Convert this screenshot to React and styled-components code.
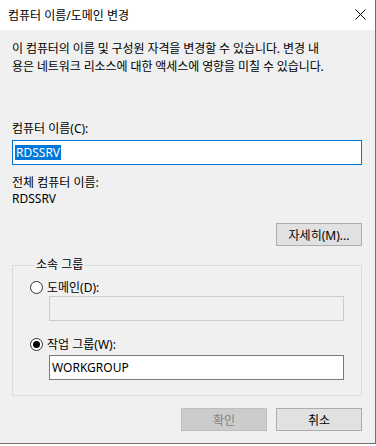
import React from "react";
import styled, { createGlobalStyle } from "styled-components";

const GlobalStyle = createGlobalStyle`
	html, body {
		margin: 0;
		padding: 0;
		background: #ffffff;
	}
	body {
		font-family: "Noto Sans", "Noto Sans CJK KR", sans-serif;
		font-size: 12px;
		color: #000000;
	}
`;

const StyledWindow = styled.div`
	width: 375px;
	height: 443px;
	background: #f0f0f0;
	border-right: 1px solid #6f6f6f;
	border-bottom: 1px solid #6f6f6f;
	display: flex;
	flex-direction: column;
`;

const TitleBar = styled.div`
	height: 30px;
	background: #ffffff;
	display: flex;
	align-items: center;
	justify-content: space-between;
	padding-left: 8px;
	font-size: 12px;
`;

const CloseButton = styled.div`
	width: 30px;
	height: 30px;
	display: flex;
	align-items: center;
	justify-content: center;
	margin-top: -2px;
`;

const Body = styled.div`
	padding: 10px 13px 0 12px;
	display: flex;
	flex-direction: column;
`;

const Description = styled.p`
	margin: 0;
	line-height: 18px;
	letter-spacing: -0.1px;
`;

const Label = styled.div`
	line-height: 16px;
	margin-top: ${(p) => p.$top || 0}px;
`;

const TextBox = styled.div`
	box-sizing: border-box;
	height: ${(p) => p.$height || 25}px;
	width: ${(p) => (p.$width ? p.$width + "px" : "100%")};
	margin-top: ${(p) => p.$top || 0}px;
	margin-left: ${(p) => p.$left || 0}px;
	background: ${(p) => (p.$disabled ? "#f0f0f0" : "#ffffff")};
	border: 1px solid ${(p) => (p.$focused ? "#0078d7" : p.$disabled ? "#cccccc" : "#7a7a7a")};
	padding: 0 2px;
	display: flex;
	align-items: center;
`;

const Selected = styled.span`
	background: #0078d7;
	color: #ffffff;
	line-height: 15px;
	padding: 0 1px;
`;

const ButtonRow = styled.div`
	display: flex;
	justify-content: flex-end;
	gap: 9px;
	margin-top: ${(p) => p.$top || 0}px;
`;

const Button = styled.div`
	box-sizing: border-box;
	width: 86px;
	height: 23px;
	display: flex;
	align-items: center;
	justify-content: center;
	background: ${(p) => (p.$disabled ? "#cccccc" : "#e1e1e1")};
	border: 1px solid ${(p) => (p.$disabled ? "#bfbfbf" : "#adadad")};
	color: ${(p) => (p.$disabled ? "#838383" : "#000000")};
`;

const GroupBox = styled.fieldset`
	margin: 11px 0 0 0;
	padding: 0 17px 15px 17px;
	border: 1px solid #dcdcdc;
	display: flex;
	flex-direction: column;

	legend {
		padding: 0 2px;
		margin-left: 4px;
		line-height: 16px;
	}
`;

const RadioRow = styled.div`
	display: flex;
	align-items: center;
	gap: 4px;
	height: 16px;
	margin-top: ${(p) => p.$top || 0}px;
`;

const RadioCircle = styled.span`
	box-sizing: border-box;
	width: 13px;
	height: 13px;
	border-radius: 50%;
	border: 1px solid #333333;
	background: #ffffff;
	display: flex;
	align-items: center;
	justify-content: center;

	&::after {
		content: "";
		width: 7px;
		height: 7px;
		border-radius: 50%;
		background: ${(p) => (p.$checked ? "#000000" : "transparent")};
	}
`;

const Radio = ({ checked, label, top }) => (
	<RadioRow $top={top}>
		<RadioCircle $checked={checked} />
		<span>{label}</span>
	</RadioRow>
);

const App = () => {
	return (
		<>
			<GlobalStyle />
			<StyledWindow>
				<TitleBar>
					<span>컴퓨터 이름/도메인 변경</span>
					<CloseButton>
						<svg width="11" height="11" viewBox="0 0 11 11">
							<path d="M0.5 0.5 L10.5 10.5 M10.5 0.5 L0.5 10.5" stroke="#000" strokeWidth="1" />
						</svg>
					</CloseButton>
				</TitleBar>
				<Body>
					<Description>
						이 컴퓨터의 이름 및 구성원 자격을 변경할 수 있습니다. 변경 내
						<br />
						용은 네트워크 리소스에 대한 액세스에 영향을 미칠 수 있습니다.
					</Description>
					<Label $top={45}>컴퓨터 이름(C):</Label>
					<TextBox $focused $top={3}>
						<Selected>RDSSRV</Selected>
					</TextBox>
					<Label $top={10}>전체 컴퓨터 이름:</Label>
					<Label>RDSSRV</Label>
					<ButtonRow $top={16}>
						<Button>자세히(M)...</Button>
					</ButtonRow>
					<GroupBox>
						<legend>소속 그룹</legend>
						<Radio label="도메인(D):" top={6} />
						<TextBox $disabled $width={295} $left={19} $top={1} />
						<Radio checked label="작업 그룹(W):" top={15} />
						<TextBox $width={295} $left={19} $top={3}>
							WORKGROUP
						</TextBox>
					</GroupBox>
					<ButtonRow $top={12}>
						<Button $disabled>확인</Button>
						<Button>취소</Button>
					</ButtonRow>
				</Body>
			</StyledWindow>
		</>
	);
};

export default App;
